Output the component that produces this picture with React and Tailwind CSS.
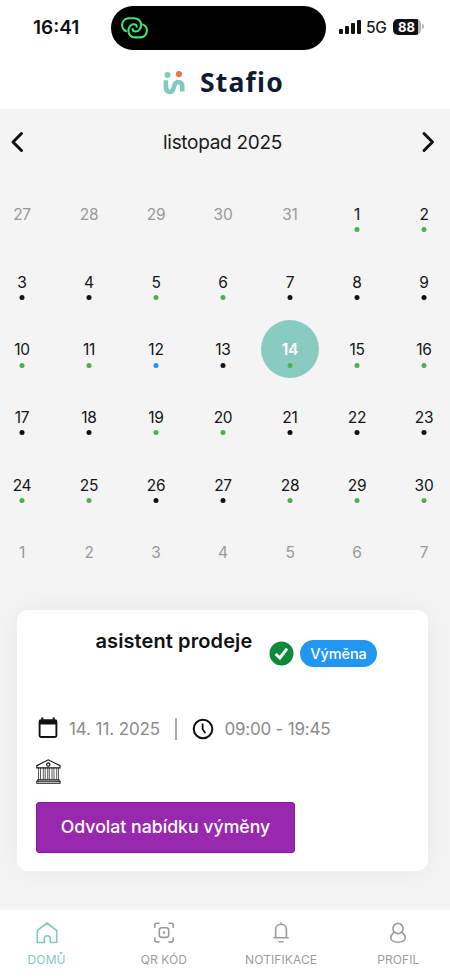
import React from 'react';

const DOTS = { g: 'bg-[#4caf50]', k: 'bg-[#111111]', b: 'bg-[#2196f3]' };

const WEEKS = [
  [['27'], ['28'], ['29'], ['30'], ['31'], ['1', 'g'], ['2', 'g']],
  [['3', 'k'], ['4', 'k'], ['5', 'g'], ['6', 'g'], ['7', 'k'], ['8', 'k'], ['9', 'k']],
  [['10', 'g'], ['11', 'g'], ['12', 'b'], ['13', 'k'], ['14', 'g'], ['15', 'g'], ['16', 'g']],
  [['17', 'k'], ['18', 'k'], ['19', 'g'], ['20', 'g'], ['21', 'k'], ['22', 'k'], ['23', 'k']],
  [['24', 'g'], ['25', 'g'], ['26', 'k'], ['27', 'k'], ['28', 'g'], ['29', 'g'], ['30', 'g']],
  [['1'], ['2'], ['3'], ['4'], ['5'], ['6'], ['7']],
];

function Day({ day, dot }) {
  const selected = day === '14';
  const tone = selected ? 'font-semibold text-white' : dot ? 'text-[#151515]' : 'text-[#999999]';
  return (
    <div className="relative flex w-10 items-center justify-center">
      {selected && (
        <span className="absolute left-1/2 top-1/2 -mt-px size-[58px] -translate-x-1/2 -translate-y-1/2 rounded-full bg-[#8acbc1]" />
      )}
      <span className={`relative pt-[1.6px] text-[15.5px] leading-5 tracking-[-0.25px] ${tone}`}>{day}</span>
      {dot && (
        <span className={`absolute left-1/2 top-1/2 mt-[13px] size-[5px] -translate-x-1/2 rounded-full ${DOTS[dot]}`} />
      )}
    </div>
  );
}

function StatusBar() {
  return (
    <div className="flex h-[55px] items-center">
      <div className="w-[111px] pl-[33px] text-[19px] font-semibold leading-6 text-[#111]">16:41</div>
      <div className="h-11 w-[215px] rounded-full bg-black pl-[10px] pt-[11px]">
        <svg width="27" height="22" viewBox="0 0 27 22" fill="none" stroke="#41e573" strokeWidth="2.1" strokeLinecap="round">
          <path d="M5 14.2C2.7 13.2 1.1 11 1.1 8.1C1.1 4 4 1.2 7.7 1.2H13.2C17 1.2 20.1 4 20.1 7.9C20.1 11.7 17.5 14.5 14.5 14.5C12.6 14.5 11.7 13.4 11.7 12" />
          <path d="M22.2 7.6C24.3 8.6 25.9 10.8 25.9 13.5C25.9 17.4 23 20.4 19.2 20.4H13.8C10.1 20.4 7.4 17.4 7.4 13.7C7.4 10.1 9.8 7.3 12.8 7.3C14.7 7.3 15.7 8.4 15.7 9.8" />
        </svg>
      </div>
      <div className="ml-[13px] flex items-center">
        <div className="mb-[2px] flex h-[14px] w-[22px] items-end justify-between">
          <span className="h-[5px] w-[3.5px] rounded-[1px] bg-[#111]" />
          <span className="h-[8px] w-[3.5px] rounded-[1px] bg-[#111]" />
          <span className="h-[11px] w-[3.5px] rounded-[1px] bg-[#111]" />
          <span className="h-[14px] w-[3.5px] rounded-[1px] bg-[#111]" />
        </div>
        <span className="ml-[5px] w-[27px] text-[15.5px] font-medium leading-5 tracking-[-0.3px] text-[#222]">5G</span>
        <span className="mb-[2px] flex h-4 w-[28px] items-center justify-center rounded-[5px] bg-linear-to-r from-[#111] from-88% to-[#b5b5b5] to-88% pr-px text-[13px] font-bold leading-4 text-white">88</span>
        <span className="mb-[2px] ml-px h-[5px] w-[2px] rounded-r-full bg-[#b5b5b5]" />
      </div>
    </div>
  );
}

function Brand() {
  return (
    <div className="flex h-[55px] items-center border-b border-[#f1f1f1] pl-[163px]">
      <svg className="mt-px" width="22" height="24" viewBox="0 0 22 24" fill="none">
        <circle cx="4.5" cy="3.9" r="3" fill="#80cbc1" />
        <circle cx="15.9" cy="3.1" r="3.1" fill="#ef7245" />
        <path d="M2.9 9.3V15.5C2.9 19 4.3 21 6.9 21C12.7 21 9.1 11 14.9 11C17.9 11 19.3 12.9 19.3 15.6V20.5" stroke="#80cbc1" strokeWidth="4.6" />
      </svg>
      <span className="ml-[15px] font-['Noto_Sans',sans-serif] text-[26.5px] font-bold leading-8 tracking-[1.2px] text-[#101a33]">Stafio</span>
    </div>
  );
}

function ShiftCard() {
  return (
    <section className="ml-[17px] mt-6 h-[261px] w-[411px] rounded-[11px] bg-white shadow-[0_0_30px_rgba(0,0,0,0.05)]">
      <div className="flex h-[101px]">
        <h2 className="ml-[78.5px] mt-[18px] w-[173.5px] whitespace-nowrap text-[20px] font-semibold leading-[26px] tracking-[0.1px] text-[#111]">asistent prodeje</h2>
        <svg className="mt-[31px]" width="25" height="25" viewBox="0 0 25 25" fill="none">
          <circle cx="12.5" cy="12.5" r="12" fill="#0b8a39" />
          <path d="M6.7 13L10.9 17L18 7.7" stroke="#fff" strokeWidth="3" />
        </svg>
        <span className="ml-[6px] mt-[30px] flex h-[27px] w-[77px] items-center justify-center rounded-full bg-[#2196f3] text-[14.5px] font-medium tracking-[-0.1px] text-white">Výměna</span>
      </div>
      <div className="flex h-9 items-center pl-[21px] text-[17px] tracking-[-0.1px] text-[#8b8b8b]">
        <svg className="mb-[3px]" width="20" height="22" viewBox="0 0 20 22" fill="none">
          <rect x="1.6" y="3.2" width="16.8" height="16.8" rx="1.5" stroke="#111" strokeWidth="1.9" />
          <path d="M1 3H19V7.5H1Z" fill="#111" />
          <path d="M4.3 .5V4M15.7 .5V4" stroke="#111" strokeWidth="2" />
        </svg>
        <span className="ml-[11px] w-[106px] whitespace-nowrap pt-px">14. 11. 2025</span>
        <span className="h-[22px] w-[1.5px] bg-[#aaaaaa]" />
        <svg className="ml-[15px]" width="22" height="22" viewBox="0 0 22 22" fill="none" stroke="#111">
          <circle cx="11" cy="11" r="9.3" strokeWidth="2" />
          <path d="M10.6 5.5V11L13.3 15.2" strokeWidth="1.8" />
        </svg>
        <span className="ml-[11px] whitespace-nowrap pt-px tracking-[-0.22px]">09:00 - 19:45</span>
      </div>
      <svg className="ml-[19px] mt-[12px]" width="25" height="25" viewBox="0 0 25 25" fill="none" stroke="#111" strokeWidth="1.1">
        <path d="M.8 8V6.7L12.3 .8L24 6.7V8.9H.8Z" />
        <circle cx="12.3" cy="5.6" r="1.7" />
        <path d="M2.5 9V20.5M4.5 9V20.5M7.3 9V20.5M9.2 9V20.5M11.7 9V20.5M13.3 9V20.5M16 9V20.5M18 9V20.5M20.7 9V20.5M22.5 9V20.5" strokeWidth=".7" />
        <path d="M1.8 20.7H23V22.3H24V24.2H.8V22.3H1.8ZM1.8 22.3H23" />
      </svg>
      <button className="ml-[19px] mt-[18px] flex h-[51px] w-[259px] items-center justify-center whitespace-nowrap rounded-[3px] border border-[#8c159f] bg-[#9829ae] text-[17.7px] font-medium text-white">Odvolat nabídku výměny</button>
    </section>
  );
}

function NavItem({ label, active, children }) {
  return (
    <div className={`flex w-1/4 flex-col items-center ${active ? 'text-[#82c9bf]' : 'text-[#9b9b9b]'}`}>
      <svg className="mt-[11px]" width="24" height="24" viewBox="0 0 24 24" fill="none" stroke="currentColor" strokeWidth="1.6" strokeLinecap="round" strokeLinejoin="round">{children}</svg>
      <span className="mt-[7px] whitespace-nowrap text-[12px] leading-4 tracking-[0.1px]">{label}</span>
    </div>
  );
}

export default function App() {
  return (
    <main className="flex h-[978px] w-[450px] flex-col overflow-hidden bg-[#f4f4f4] font-[Inter,sans-serif]">
      <header className="bg-white">
        <StatusBar />
        <Brand />
      </header>
      <div className="flex h-[70.6px] items-start justify-between pl-[10px] pr-[15px] pt-[19.5px]">
        <svg className="mt-[1.5px]" width="14" height="22" viewBox="0 0 14 22" fill="none" stroke="#111" strokeWidth="3" strokeLinecap="round" strokeLinejoin="round">
          <path d="M11.5 2.5L3 11L11.5 19.5" />
        </svg>
        <h1 className="whitespace-nowrap text-[19px] leading-[26px] tracking-[-0.3px] text-[#191919]">listopad 2025</h1>
        <svg className="mt-[1.5px]" width="14" height="22" viewBox="0 0 14 22" fill="none" stroke="#111" strokeWidth="3" strokeLinecap="round" strokeLinejoin="round">
          <path d="M3 2.5L11.5 11L3 19.5" />
        </svg>
      </div>
      <div>
        {WEEKS.map((week, i) => (
          <div key={i} className="flex h-[67.6px] justify-between pl-[2px] pr-[6px]">
            {week.map(([day, dot]) => <Day key={day} day={day} dot={dot} />)}
          </div>
        ))}
      </div>
      <ShiftCard />
      <nav className="-ml-3 mt-auto flex h-[68px] w-[469px] shrink-0 bg-white">
        <NavItem label="DOMŮ" active>
          <path d="M2.3 9.5L12 2L21.7 9.5V21.5H15.2V17.5C15.2 13.8 9.3 13.8 9.3 17.5V21.5H2.3Z" />
        </NavItem>
        <NavItem label="QR KÓD">
          <path d="M2.8 6.2V4.3C2.8 3 3.5 2.3 4.8 2.3H7M17 2.3H19.2C20.5 2.3 21.2 3 21.2 4.3V6.2M21.2 16.8V18.9C21.2 20.2 20.5 20.9 19.2 20.9H17M7 20.9H4.8C3.5 20.9 2.8 20.2 2.8 18.9V16.8" />
          <rect x="7.3" y="6.8" width="9.4" height="9.6" rx="2.5" />
          <circle cx="12" cy="11.6" r=".5" fill="currentColor" />
        </NavItem>
        <NavItem label="NOTIFIKACE">
          <path d="M4.8 16.7H19.2M6.6 16.5V8.6C6.6 1.4 17.4 1.4 17.4 8.6V16.5M12 2.5V2M10 20.7H14" />
        </NavItem>
        <NavItem label="PROFIL">
          <circle cx="12" cy="7.5" r="5.1" />
          <path d="M7.5 11.7C5.5 13.4 4.8 15.1 4.8 17C4.8 22.6 19.2 22.6 19.2 17C19.2 15.1 18.5 13.4 16.5 11.7" />
        </NavItem>
      </nav>
    </main>
  );
}
